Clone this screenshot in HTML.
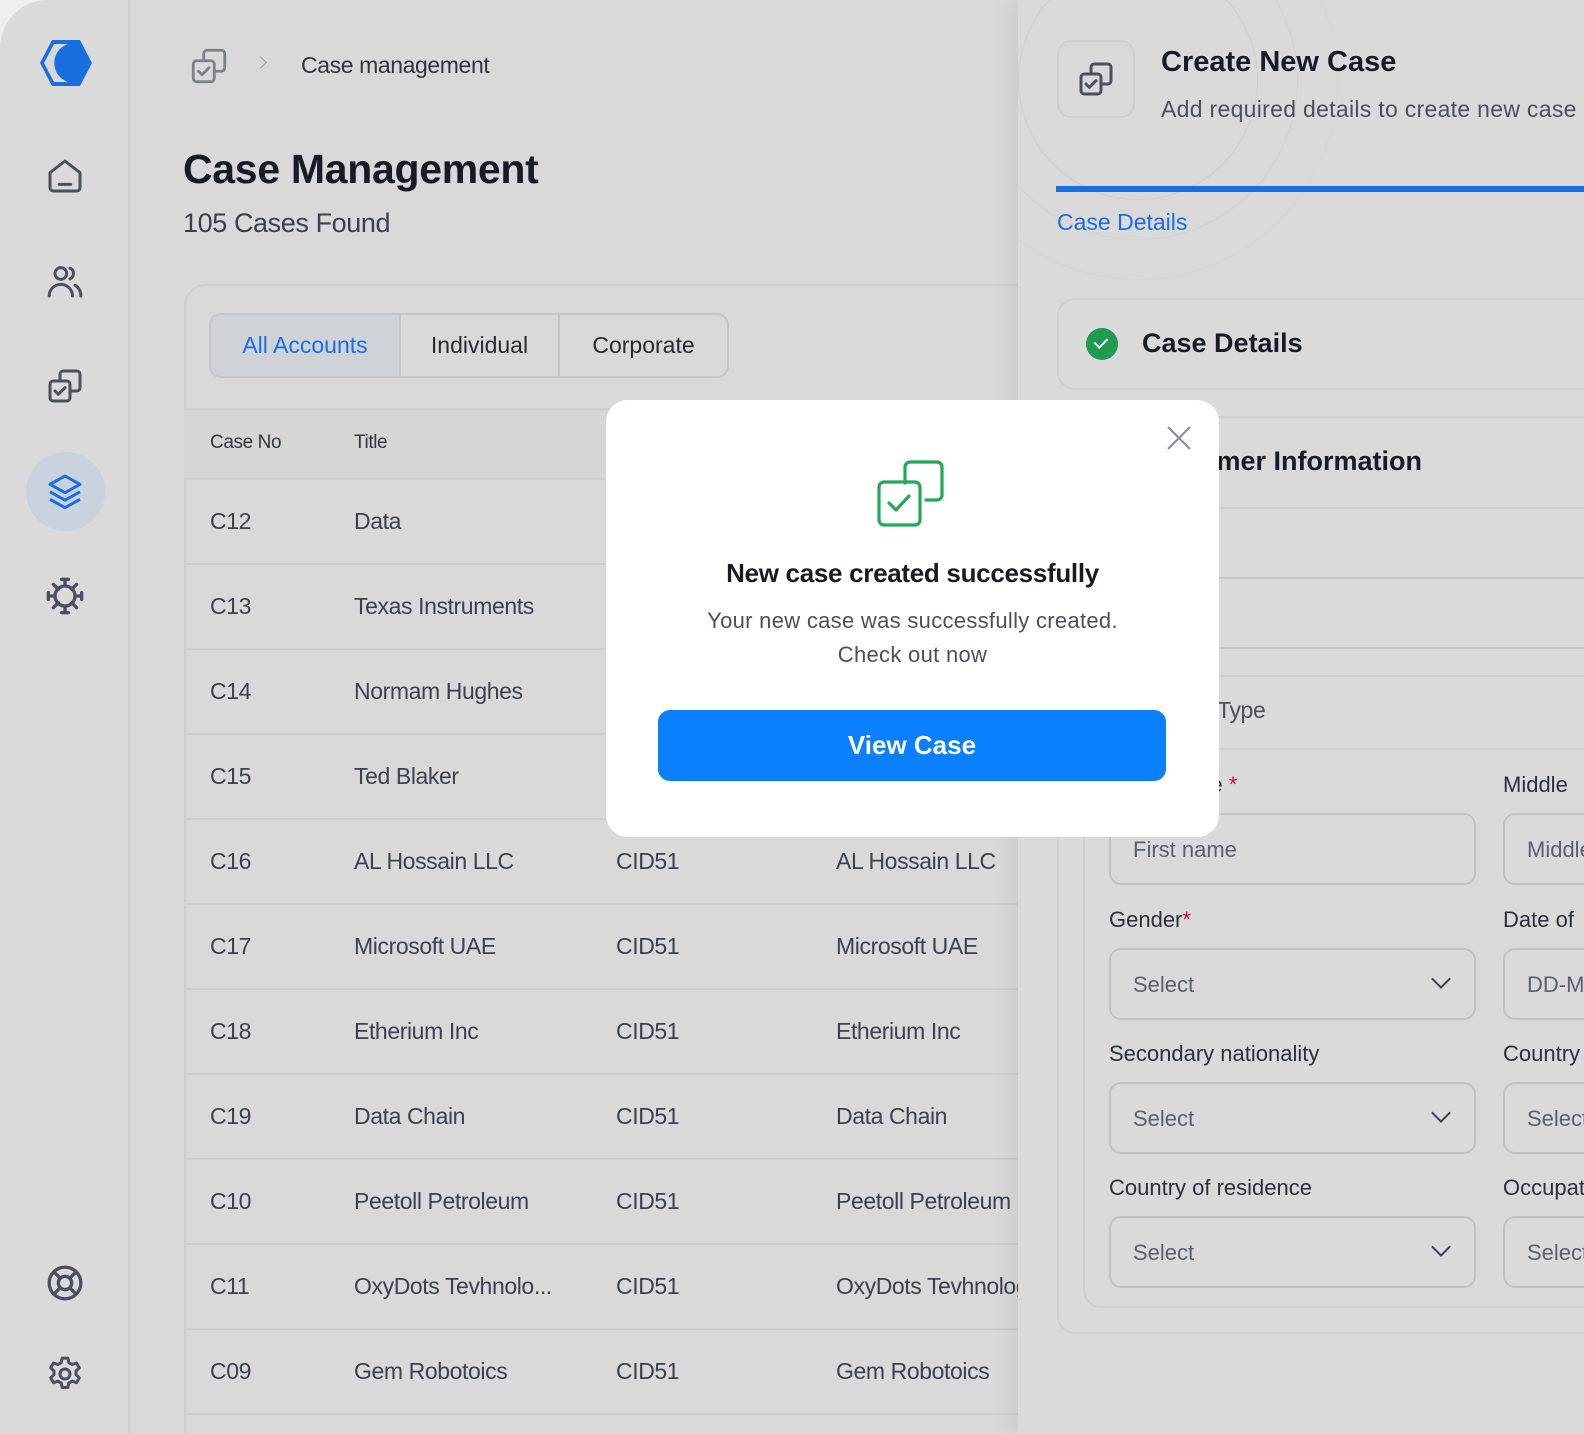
<!DOCTYPE html>
<html><head><meta charset="utf-8"><style>
*{box-sizing:border-box;margin:0;padding:0}
body{width:1584px;height:1434px;overflow:hidden;background:#efefef;font-family:"Liberation Sans",sans-serif;position:relative;color:#1d2330}
.a{position:absolute}
.app{position:absolute;left:0;top:0;width:1584px;height:1434px;background:#d9d9d9;border-top-left-radius:48px;overflow:hidden}
.side{position:absolute;left:0;top:0;width:130px;height:1434px;border-right:2px solid #cfcfcf;background:#dadada}
.ic{position:absolute;left:45px;width:40px;height:40px}
.t{position:absolute;font-size:23px;color:#3a4150;letter-spacing:-0.4px;white-space:nowrap}
.row{position:absolute;left:184px;width:850px;height:85px;border-top:2px solid #cdcdcd}
.lbl{position:absolute;font-size:22px;color:#2a303c;white-space:nowrap}
.inp{position:absolute;border:2px solid #c2c2c2;border-radius:12px;height:72px;font-size:22px;color:#5a6070;padding:22px 0 0 22px;white-space:nowrap;overflow:hidden}
.chev{position:absolute;right:26px;width:14px;height:14px;border-right:2.5px solid #3a4150;border-bottom:2.5px solid #3a4150;transform:rotate(45deg);top:22px}
</style></head><body>
<div class="app">
<div class="side">
 <svg class="a" style="left:38px;top:38px" width="56" height="50" viewBox="0 0 56 50"><polygon points="14,2 42,2 54,25 42,48 14,48 2,25" fill="#1a6fe0"/><path d="M30 6 A20 20 0 0 0 30 44 L16 44 L6 25 L16 6Z" fill="#d9d9d9"/></svg>
 <svg class="ic" style="top:156px" viewBox="0 0 24 24" fill="none" stroke="#4a505e" stroke-width="1.8" stroke-linejoin="round"><path d="M3 10l9-7 9 7v9a2 2 0 0 1-2 2H5a2 2 0 0 1-2-2z"/><path d="M8.5 17h7" stroke-linecap="round"/></svg>
 <svg class="ic" style="top:261px" viewBox="0 0 24 24" fill="none" stroke="#4a505e" stroke-width="1.8" stroke-linecap="round"><circle cx="9.5" cy="7.5" r="3.5"/><path d="M2.5 21a7 7 0 0 1 14 0"/><path d="M15 4.3a3.5 3.5 0 0 1 0 6.4M18 14.5a7 7 0 0 1 3.5 6.5"/></svg>
 <svg class="ic" style="top:366px" viewBox="0 0 24 24" fill="none" stroke="#4a505e" stroke-width="1.8" stroke-linecap="round" stroke-linejoin="round"><path d="M9 9V5a2 2 0 0 1 2-2h8a2 2 0 0 1 2 2v8a2 2 0 0 1-2 2h-4"/><rect x="3" y="9" width="12" height="12" rx="2"/><path d="M6 15l2 2 4-4"/></svg>
 <div class="a" style="left:26px;top:452px;width:79px;height:79px;border-radius:50%;background:#c9d2dd"></div>
 <svg class="ic" style="top:471px" viewBox="0 0 24 24" fill="none" stroke="#1a6fe0" stroke-width="1.8" stroke-linejoin="round"><path d="M12 3l9 5-9 5-9-5z"/><path d="M3 12.5l9 5 9-5M3 17l9 5 9-5"/></svg>
 <svg class="ic" style="top:576px" viewBox="0 0 24 24" fill="none" stroke="#4a505e" stroke-width="2" stroke-linecap="round"><circle cx="12" cy="12" r="6"/><path d="M12 2v4M12 18v4M2 12h4M18 12h4M5 5l3 3M16 16l3 3M19 5l-3 3M8 16l-3 3M10 2h4M10 22h4M2 10v4M22 10v4"/></svg>
 <svg class="ic" style="top:1263px" viewBox="0 0 24 24" fill="none" stroke="#4a505e" stroke-width="2"><circle cx="12" cy="12" r="9.5"/><circle cx="12" cy="12" r="4"/><path d="M5.3 5.3l3.9 3.9M18.7 5.3l-3.9 3.9M5.3 18.7l3.9-3.9M18.7 18.7l-3.9-3.9"/></svg>
 <svg class="ic" style="top:1354px" viewBox="0 0 24 24" fill="none" stroke="#4a505e" stroke-width="1.8" stroke-linejoin="round"><circle cx="12" cy="12" r="3"/><path d="M10.3 2.5h3.4l.6 2.7 2 1.1 2.6-.9 1.7 2.9-2 1.9v2.2l2 1.9-1.7 2.9-2.6-.9-2 1.1-.6 2.7h-3.4l-.6-2.7-2-1.1-2.6.9-1.7-2.9 2-1.9v-2.2l-2-1.9 1.7-2.9 2.6.9 2-1.1z"/></svg>
</div>

<svg class="a" style="left:188px;top:45px" width="42" height="42" viewBox="0 0 24 24" fill="none" stroke="#7b808c" stroke-width="1.6" stroke-linecap="round" stroke-linejoin="round"><path d="M9 9V5a2 2 0 0 1 2-2h8a2 2 0 0 1 2 2v8a2 2 0 0 1-2 2h-4"/><rect x="3" y="9" width="12" height="12" rx="2"/><path d="M6 15l2 2 4-4"/></svg>
<div class="a" style="left:256px;top:58px;width:9px;height:9px;border-right:1.5px solid #a0a4ac;border-top:1.5px solid #a0a4ac;transform:rotate(45deg)"></div>
<div class="t" style="left:301px;top:52px;font-size:23px;color:#2e3440">Case management</div>
<div class="a" style="left:183px;top:146px;font-size:41px;font-weight:bold;letter-spacing:-0.3px;color:#161b26">Case Management</div>
<div class="t" style="left:183px;top:208px;font-size:27px;color:#3a404c">105 Cases Found</div>

<div class="a" style="left:184px;top:284px;width:900px;height:1200px;border:2px solid #cfcfcf;border-top-left-radius:22px;background:#d9d9d9"></div>
<div class="a" style="left:209px;top:313px;width:520px;height:65px;border:2px solid #c4c6ca;border-radius:12px;overflow:hidden;display:flex">
 <div style="width:190px;background:#cfd3d8;border-right:2px solid #c4c6ca;color:#1a6fe0;font-size:23px;text-align:center;line-height:61px">All Accounts</div>
 <div style="width:159px;border-right:2px solid #c4c6ca;font-size:23px;text-align:center;line-height:61px;color:#252a35">Individual</div>
 <div style="flex:1;font-size:23px;text-align:center;line-height:61px;color:#252a35">Corporate</div>
</div>
<div class="row" style="top:408px;height:70px;background:#d6d6d6"></div>
<div class="t" style="left:210px;top:432px;font-size:19px;color:#2f3542">Case No</div>
<div class="t" style="left:354px;top:432px;font-size:19px;color:#2f3542">Title</div>

<div class="row" style="top:478px"></div><div class="t" style="left:210px;top:508px">C12</div><div class="t" style="left:354px;top:508px">Data</div>
<div class="row" style="top:563px"></div><div class="t" style="left:210px;top:593px">C13</div><div class="t" style="left:354px;top:593px">Texas Instruments</div>
<div class="row" style="top:648px"></div><div class="t" style="left:210px;top:678px">C14</div><div class="t" style="left:354px;top:678px">Normam Hughes</div>
<div class="row" style="top:733px"></div><div class="t" style="left:210px;top:763px">C15</div><div class="t" style="left:354px;top:763px">Ted Blaker</div>
<div class="row" style="top:818px"></div><div class="t" style="left:210px;top:848px">C16</div><div class="t" style="left:354px;top:848px">AL Hossain LLC</div><div class="t" style="left:616px;top:848px">CID51</div><div class="t" style="left:836px;top:848px">AL Hossain LLC</div>
<div class="row" style="top:903px"></div><div class="t" style="left:210px;top:933px">C17</div><div class="t" style="left:354px;top:933px">Microsoft UAE</div><div class="t" style="left:616px;top:933px">CID51</div><div class="t" style="left:836px;top:933px">Microsoft UAE</div>
<div class="row" style="top:988px"></div><div class="t" style="left:210px;top:1018px">C18</div><div class="t" style="left:354px;top:1018px">Etherium Inc</div><div class="t" style="left:616px;top:1018px">CID51</div><div class="t" style="left:836px;top:1018px">Etherium Inc</div>
<div class="row" style="top:1073px"></div><div class="t" style="left:210px;top:1103px">C19</div><div class="t" style="left:354px;top:1103px">Data Chain</div><div class="t" style="left:616px;top:1103px">CID51</div><div class="t" style="left:836px;top:1103px">Data Chain</div>
<div class="row" style="top:1158px"></div><div class="t" style="left:210px;top:1188px">C10</div><div class="t" style="left:354px;top:1188px">Peetoll Petroleum</div><div class="t" style="left:616px;top:1188px">CID51</div><div class="t" style="left:836px;top:1188px">Peetoll Petroleum</div>
<div class="row" style="top:1243px"></div><div class="t" style="left:210px;top:1273px">C11</div><div class="t" style="left:354px;top:1273px">OxyDots Tevhnolo...</div><div class="t" style="left:616px;top:1273px">CID51</div><div class="t" style="left:836px;top:1273px">OxyDots Tevhnology</div>
<div class="row" style="top:1328px"></div><div class="t" style="left:210px;top:1358px">C09</div><div class="t" style="left:354px;top:1358px">Gem Robotoics</div><div class="t" style="left:616px;top:1358px">CID51</div><div class="t" style="left:836px;top:1358px">Gem Robotoics</div>
<div class="row" style="top:1413px"></div>

<div class="a" style="left:1018px;top:0;width:566px;height:1434px;background:#dadada;box-shadow:-10px 0 16px rgba(0,0,0,0.05);overflow:hidden">
 <div class="a" style="left:0;top:-40px;width:240px;height:240px;border-radius:50%;border:1.5px solid #d0d0d0"></div>
 <div class="a" style="left:-40px;top:-80px;width:320px;height:320px;border-radius:50%;border:1.5px solid #d3d3d3"></div>
 <div class="a" style="left:-80px;top:-120px;width:400px;height:400px;border-radius:50%;border:1.5px solid #d6d6d6"></div>
</div>
<div class="a" style="left:1057px;top:40px;width:78px;height:78px;border:2px solid #cfcfcf;border-radius:14px;background:#d9d9d9"></div>
<svg class="a" style="left:1076px;top:59px" width="40" height="40" viewBox="0 0 24 24" fill="none" stroke="#4a505e" stroke-width="1.8" stroke-linecap="round" stroke-linejoin="round"><path d="M9 9V5a2 2 0 0 1 2-2h8a2 2 0 0 1 2 2v8a2 2 0 0 1-2 2h-4"/><rect x="3" y="9" width="12" height="12" rx="2"/><path d="M6 15l2 2 4-4"/></svg>
<div class="a" style="left:1161px;top:46px;font-size:29px;font-weight:bold;color:#161b26;white-space:nowrap">Create New Case</div>
<div class="t" style="left:1161px;top:96px;font-size:23px;color:#4a505c;letter-spacing:0.3px">Add required details to create new case</div>
<div class="a" style="left:1056px;top:186px;width:528px;height:6px;background:#1a6fe0"></div>
<div class="a" style="left:1057px;top:209px;font-size:23px;color:#1a6fe0;white-space:nowrap">Case Details</div>

<div class="a" style="left:1057px;top:298px;width:560px;height:92px;border:2px solid #cfcfcf;border-radius:18px"></div>
<div class="a" style="left:1086px;top:328px;width:32px;height:32px;border-radius:50%;background:#1f9a52"></div>
<div class="a" style="left:1097px;top:335px;width:8px;height:13px;border-right:2.5px solid #fff;border-bottom:2.5px solid #fff;transform:rotate(45deg)"></div>
<div class="a" style="left:1142px;top:328px;font-size:27px;font-weight:bold;color:#161b26">Case Details</div>

<div class="a" style="left:1057px;top:416px;width:560px;height:918px;border:2px solid #cfcfcf;border-radius:18px"></div>
<div class="a" style="left:1057px;top:507px;width:527px;height:2px;background:#cdcdcd"></div>
<div class="a" style="left:1057px;top:577px;width:527px;height:2px;background:#c6c6c6"></div>
<div class="a" style="left:1057px;top:647px;width:527px;height:2px;background:#c6c6c6"></div>
<div class="a" style="left:1057px;top:675px;width:527px;height:2px;background:#cdcdcd"></div>
<div class="a" style="left:1140px;top:446px;font-size:27px;font-weight:bold;color:#161b26;white-space:nowrap">Customer Information</div>
<div class="t" style="left:1115px;top:697px;font-size:23px;color:#4a505c">Customer Type</div>
<div class="a" style="left:1083px;top:748px;width:530px;height:560px;border:2px solid #cfcfcf;border-radius:18px"></div>
<div class="lbl" style="left:1115px;top:772px">First Name <span style="color:#c8102e">*</span></div>
<div class="lbl" style="left:1503px;top:772px">Middle</div>
<div class="inp" style="left:1109px;top:813px;width:367px">First name</div>
<div class="inp" style="left:1503px;top:813px;width:120px">Middle</div>
<div class="lbl" style="left:1109px;top:907px">Gender<span style="color:#c8102e">*</span></div>
<div class="lbl" style="left:1503px;top:907px">Date of</div>
<div class="inp" style="left:1109px;top:948px;width:367px">Select<div class="chev"></div></div>
<div class="inp" style="left:1503px;top:948px;width:120px">DD-MM</div>
<div class="lbl" style="left:1109px;top:1041px">Secondary nationality</div>
<div class="lbl" style="left:1503px;top:1041px">Country</div>
<div class="inp" style="left:1109px;top:1082px;width:367px">Select<div class="chev"></div></div>
<div class="inp" style="left:1503px;top:1082px;width:120px">Select</div>
<div class="lbl" style="left:1109px;top:1175px">Country of residence</div>
<div class="lbl" style="left:1503px;top:1175px">Occupation</div>
<div class="inp" style="left:1109px;top:1216px;width:367px">Select<div class="chev"></div></div>
<div class="inp" style="left:1503px;top:1216px;width:120px">Select</div>

<div class="a" style="left:606px;top:400px;width:613px;height:437px;background:#fff;border-radius:22px">
 <svg class="a" style="left:560px;top:25px" width="26" height="26" viewBox="0 0 26 26" stroke="#8a8fa0" stroke-width="2.2"><path d="M2 2l22 22M24 2L2 24"/></svg>
 <svg class="a" style="left:270px;top:56px" width="72" height="72" viewBox="0 0 72 72" fill="none" stroke="#22a85a" stroke-width="3.2" stroke-linecap="round" stroke-linejoin="round"><path d="M29 27V11a5 5 0 0 1 5-5h27a5 5 0 0 1 5 5v28a5 5 0 0 1-5 5H50"/><rect x="3" y="26" width="41" height="43" rx="5"/><path d="M13 47l7 7 13-14"/></svg>
 <div class="a" style="left:0;top:158px;width:613px;text-align:center;font-size:26px;font-weight:bold;color:#161b26;letter-spacing:-0.3px">New case created successfully</div>
 <div class="a" style="left:0;top:204px;width:613px;text-align:center;font-size:22px;line-height:34px;color:#4a505c;letter-spacing:0.3px">Your new case was successfully created.<br>Check out now</div>
 <div class="a" style="left:52px;top:310px;width:508px;height:71px;background:#0a80ff;border-radius:12px;text-align:center;line-height:71px;color:#fff;font-size:26px;font-weight:bold">View Case</div>
</div>
</div>
</body></html>
